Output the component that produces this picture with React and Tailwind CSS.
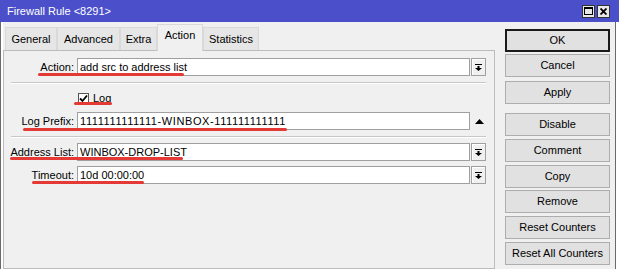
import React from "react";

function DropBtn() {
  return (
    <div className="ml-[1px] flex h-[18px] w-[15px] items-center justify-center border border-[#a0a0a0] bg-[#f0f0f0] shadow-[inset_1px_1px_0_#ffffff]">
      <svg width="7" height="7" viewBox="0 0 7 7">
        <rect x="0" y="0" width="7" height="1" fill="#000" />
        <rect x="2.5" y="2" width="2" height="2" fill="#000" />
        <polygon points="0,4 7,4 3.5,7" fill="#000" />
      </svg>
    </div>
  );
}

function Field({ label, value, right, valueCls = "" }) {
  return (
    <div className="flex h-[18px] items-center">
      <div className="w-[70px] text-right leading-none text-black">{label}</div>
      <div
        className={
          "ml-[3px] flex h-[18px] w-[393px] items-center border border-[#a0a0a0] bg-white pl-[2px] leading-none text-black " +
          valueCls
        }
      >
        {value}
      </div>
      {right}
    </div>
  );
}

function Sep() {
  return <div className="ml-[7px] w-[475px] border-t border-[#c8c8c8] border-b border-b-white" />;
}

function Btn({ children, cls, def }) {
  return (
    <div
      className={
        "flex h-[23px] w-[105px] items-center justify-center leading-none text-black " +
        (def
          ? "border-2 border-[#1a1a1a] bg-[#e1e1e1] "
          : "border border-[#adadad] bg-[#e1e1e1] ") +
        cls
      }
    >
      {children}
    </div>
  );
}

function Tab({ children, w, active }) {
  return active ? (
    <div
      className={
        "relative z-10 -mb-px flex h-[27px] items-start justify-center border border-b-0 border-[#d9d9d9] bg-[#f0f0f0] pt-[5px] leading-none " +
        w
      }
    >
      {children}
    </div>
  ) : (
    <div
      className={
        "flex h-[23px] items-center justify-center border border-b-0 border-[#d9d9d9] bg-[#e6e6e6] leading-none " +
        w
      }
    >
      {children}
    </div>
  );
}

export default function App() {
  return (
    <div
      className="relative h-[269px] w-[619px] overflow-hidden bg-white text-[11px] text-black"
      style={{ fontFamily: '"Liberation Sans", Arial, sans-serif' }}
    >
      {/* title bar */}
      <div className="flex h-[22px] items-center bg-[#4b4fca] pl-[7px] pr-[9px]">
        <div className="flex-1 text-[11px] leading-none text-white">Firewall Rule &lt;8291&gt;</div>
        <div className="flex h-[13px] w-[13px] items-center justify-center border border-[#333] bg-[#e8e8e8]">
          <div className="h-[8px] w-[9px] border border-black border-t-2" />
        </div>
        <div className="ml-[2px] flex h-[13px] w-[13px] items-center justify-center border border-[#333] bg-[#e8e8e8]">
          <svg width="7" height="7" viewBox="0 0 7 7">
            <path d="M0.5 0.5 L6.5 6.5 M6.5 0.5 L0.5 6.5" stroke="#000" strokeWidth="1.8" />
          </svg>
        </div>
      </div>

      {/* body */}
      <div className="flex h-[247px] border-l border-[#6a6a6a] bg-[#f0f0f0]">
        <div className="flex w-[494px] flex-col border-l-2 border-white">
          {/* tabs */}
          <div className="flex h-[28px] items-end pl-[2px]">
            <Tab w="w-[52px]">General</Tab>
            <Tab w="w-[63px]">Advanced</Tab>
            <Tab w="w-[37px]">Extra</Tab>
            <Tab w="w-[46px]" active>Action</Tab>
            <Tab w="w-[56px]">Statistics</Tab>
          </div>
          {/* panel */}
          <div className="flex flex-1 flex-col border border-[#bcbcbc] bg-[#f0f0f0]">
            <div className="mt-[7px]">
              <Field label="Action:" value="add src to address list" right={<DropBtn />} />
            </div>
            <div className="mt-[6px]">
              <Sep />
            </div>
            <div className="ml-[74px] mt-[9px] flex h-[11px] items-center">
              <div className="flex h-[11px] w-[11px] items-center justify-center border border-[#555] bg-white">
                <svg width="9" height="9" viewBox="0 0 9 9">
                  <path d="M1 4.5 L3.5 7 L8 1.5" stroke="#000" strokeWidth="1.8" fill="none" />
                </svg>
              </div>
              <div className="ml-[4px] leading-none">Log</div>
            </div>
            <div className="mt-[8px]">
              <Field
                label="Log Prefix:"
                value="1111111111111-WINBOX-111111111111"
                valueCls="tracking-[0.6px]"
                right={
                  <svg className="ml-[5px]" width="9" height="5" viewBox="0 0 9 5">
                    <polygon points="0,5 9,5 4.5,0" fill="#000" />
                  </svg>
                }
              />
            </div>
            <div className="mt-[6px]">
              <Sep />
            </div>
            <div className="mt-[5px]">
              <Field label="Address List:" value="WINBOX-DROP-LIST" right={<DropBtn />} />
            </div>
            <div className="mt-[5px]">
              <Field label="Timeout:" value="10d 00:00:00" right={<DropBtn />} />
            </div>
          </div>
        </div>

        {/* buttons */}
        <div className="ml-[10px] flex w-[105px] flex-col">
          <Btn def cls="mt-[7px]">OK</Btn>
          <Btn cls="mt-[2px]">Cancel</Btn>
          <Btn cls="mt-[4px]">Apply</Btn>
          <Btn cls="mt-[9px]">Disable</Btn>
          <Btn cls="mt-[3px]">Comment</Btn>
          <Btn cls="mt-[3px]">Copy</Btn>
          <Btn cls="mt-[2px]">Remove</Btn>
          <Btn cls="mt-[3px]">Reset Counters</Btn>
          <Btn cls="mt-[3px]">Reset All Counters</Btn>
        </div>
        <div className="ml-[5px] w-[1px] bg-[#6a6a6a]" />
        <div className="w-[3px] bg-white" />
      </div>

      {/* red annotation underlines */}
      <div className="absolute left-[38px] top-[73px] h-[3px] w-[146px] rounded-full bg-[#e53935]" />
      <div className="absolute left-[74px] top-[102px] h-[3px] w-[38px] rounded-full bg-[#e53935]" />
      <div className="absolute left-[23px] top-[128px] h-[3px] w-[264px] rounded-full bg-[#e53935]" />
      <div className="absolute left-[10px] top-[157px] h-[3px] w-[173px] rounded-full bg-[#e53935]" />
      <div className="absolute left-[32px] top-[181px] h-[3px] w-[112px] rounded-full bg-[#e53935]" />
    </div>
  );
}
